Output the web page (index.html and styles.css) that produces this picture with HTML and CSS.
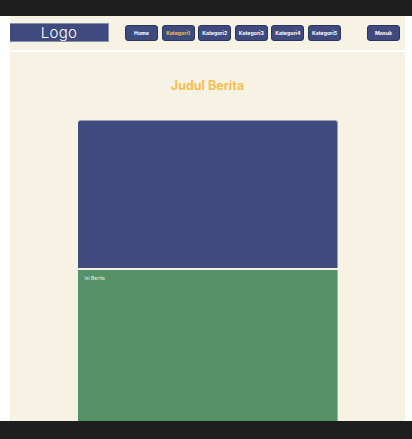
FILE: index.html
```html
<!DOCTYPE html>
<html lang="id">
<head>
<meta charset="utf-8">
<title>Berita</title>
<link rel="stylesheet" href="styles.css">
</head>
<body>
<div class="frame-top"></div>
<div class="page">
  <header class="header">
    <div class="logo">Logo</div>
    <nav class="nav">
      <a class="btn">Home</a>
      <a class="btn active">Kategori1</a>
      <a class="btn">Kategori2</a>
      <a class="btn">Kategori3</a>
      <a class="btn">Kategori4</a>
      <a class="btn">Kategori5</a>
    </nav>
    <a class="btn login">Masuk</a>
  </header>
  <main class="main">
    <h1 class="title">Judul Berita</h1>
    <div class="card">
      <div class="card-image"></div>
      <div class="card-body">Isi Berita</div>
    </div>
  </main>
</div>
<div class="frame-bottom"></div>
</body>
</html>
```
FILE: styles.css
```css
* { box-sizing: border-box; }
html, body {
  margin: 0;
  padding: 0;
  background: #ffffff;
  font-family: Inter, "Liberation Sans", sans-serif;
  height: 439px;
  overflow: hidden;
}
.frame-top {
  height: 16px;
  background: #1e1e1e;
}
.frame-bottom {
  height: 18px;
  background: #1e1e1e;
}
.page {
  margin: 0 7px 0 10px;
  height: 405px;
  display: flex;
  flex-direction: column;
  gap: 2px;
}
.header {
  height: 34px;
  background: #f7f3e4;
  display: flex;
  align-items: flex-start;
  padding-top: 7px;
}
.logo {
  width: 99px;
  height: 19px;
  background: #3f4a7e;
  border: 1px solid #8a90a8;
  border-left: none;
  color: #ffffff;
  font-size: 15px;
  font-weight: 300;
  line-height: 17px;
  text-align: center;
  letter-spacing: 0.3px;
}
.nav {
  display: flex;
  gap: 3.6px;
  margin-left: 16px;
  margin-top: 2px;
}
.btn {
  display: flex;
  align-items: center;
  justify-content: center;
  width: 33px;
  height: 16px;
  background: #3f4a7e;
  border: 1px solid #2c355e;
  border-radius: 3px;
  color: #ffffff;
  font-size: 5.2px;
  font-weight: 700;
}
.btn.active { color: #f6c04f; }
.login {
  margin-left: auto;
  margin-right: 5px;
  margin-top: 2px;
}
.main {
  flex: 1;
  background: #f7f3e4;
  display: flex;
  flex-direction: column;
  align-items: center;
  overflow: hidden;
}
.title {
  margin: 27px 0 0;
  color: #f6c04f;
  font-size: 12.5px;
  font-weight: 700;
  line-height: 14px;
}
.card {
  margin-top: 27px;
  width: 260px;
  display: flex;
  flex-direction: column;
  gap: 2px;
}
.card-image {
  height: 148px;
  background: #3f4a7e;
  border-radius: 3px 3px 0 0;
  border-top: 1px solid #9a9fb2;
  border-right: 1px solid #9a9fb2;
}
.card-body {
  height: 160px;
  background: #559366;
  border-right: 1px solid #8fc09c;
  color: #e8efe9;
  font-size: 5px;
  padding: 5px 7px;
}
```
